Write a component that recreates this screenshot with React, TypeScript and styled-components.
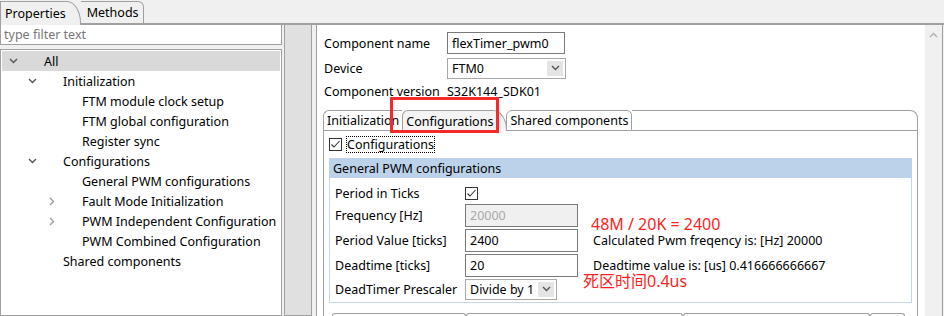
import styled, { createGlobalStyle } from "styled-components";

const GlobalStyle = createGlobalStyle`
	html, body {
		margin: 0;
		padding: 0;
		background: #f0f0f0;
	}
	body {
		font-family: "Noto Sans", "Noto Sans CJK SC", sans-serif;
		font-size: 12.5px;
		color: #000;
	}
`;

type TreeItem = { label: string; level: number; toggle?: "open" | "closed"; selected?: boolean };

const treeItems: TreeItem[] = [
	{ label: "All", level: 0, toggle: "open", selected: true },
	{ label: "Initialization", level: 1, toggle: "open" },
	{ label: "FTM module clock setup", level: 2 },
	{ label: "FTM global configuration", level: 2 },
	{ label: "Register sync", level: 2 },
	{ label: "Configurations", level: 1, toggle: "open" },
	{ label: "General PWM configurations", level: 2 },
	{ label: "Fault Mode Initialization", level: 2, toggle: "closed" },
	{ label: "PWM Independent Configuration", level: 2, toggle: "closed" },
	{ label: "PWM Combined Configuration", level: 2 },
	{ label: "Shared components", level: 1 },
];

function Chevron({ dir, color }: { dir: "down" | "right" | "up"; color: string }) {
	const pts = dir === "down" ? "1,2 4.5,5.5 8,2" : dir === "up" ? "1,6 4.5,2.5 8,6" : "3,1 6.5,4.5 3,8";
	return (
		<svg width="9" height="9" viewBox="0 0 9 9">
			<polyline points={pts} fill="none" stroke={color} strokeWidth="1.4" />
		</svg>
	);
}

function CheckBox() {
	return (
		<CheckSquare>
			<svg width="11" height="11" viewBox="0 0 11 11">
				<polyline points="1.5,5.5 4,8 9.5,2" fill="none" stroke="#333" strokeWidth="1.1" />
			</svg>
		</CheckSquare>
	);
}

export default function App() {
	return (
		<>
			<GlobalStyle />
			<Page>
				<ViewTabs>
					<ViewTab $active>Properties</ViewTab>
					<ViewTab>Methods</ViewTab>
					<ViewTabFill />
				</ViewTabs>
				<Body>
					<LeftPanel>
						<FilterInput placeholder="type filter text" />
						<TreeBox>
							{treeItems.map((item) => (
								<TreeRow key={item.label} $selected={item.selected}>
									<Toggle $level={item.level}>
										{item.toggle === "open" && <Chevron dir="down" color="#555" />}
										{item.toggle === "closed" && <Chevron dir="right" color="#9a9a9a" />}
									</Toggle>
									<TreeLabel>{item.label}</TreeLabel>
								</TreeRow>
							))}
						</TreeBox>
					</LeftPanel>
					<Sash>
						<SashBar />
					</Sash>
					<RightPanel>
						<Content>
							<FormRow $h={22}>
								<FormLabel>Component name</FormLabel>
								<TextBox $w={118}>flexTimer_pwm0</TextBox>
							</FormRow>
							<FormRow $h={21} $top={4}>
								<FormLabel>Device</FormLabel>
								<Select $w={119}>
									<span>FTM0</span>
									<DropButton>
										<Chevron dir="down" color="#555" />
									</DropButton>
								</Select>
							</FormRow>
							<FormRow $h={20} $top={2}>
								<FormLabel>Component version</FormLabel>
								<span>S32K144_SDK01</span>
							</FormRow>

							<Folder>
								<FolderTabs>
									<FolderTab>Initialization</FolderTab>
									<FolderTab $active>Configurations</FolderTab>
									<FolderTab>Shared components</FolderTab>
									<FolderTabFill />
								</FolderTabs>
								<FolderBody>
									<CheckRow>
										<CheckBox />
										<FocusText>Configurations</FocusText>
									</CheckRow>
									<Group>
										<GroupHeader>General PWM configurations</GroupHeader>
										<GroupBody>
											<FieldRow $h={20}>
												<FieldLabel>Period in Ticks</FieldLabel>
												<FieldCell>
													<CheckBox />
												</FieldCell>
											</FieldRow>
											<FieldRow $h={23} $top={1}>
												<FieldLabel>Frequency [Hz]</FieldLabel>
												<FieldInput $disabled>20000</FieldInput>
											</FieldRow>
											<FieldRow $h={23} $top={2}>
												<FieldLabel>Period Value [ticks]</FieldLabel>
												<FieldInput>2400</FieldInput>
												<Info>Calculated Pwm freqency is: [Hz] 20000</Info>
											</FieldRow>
											<FieldRow $h={23} $top={2}>
												<FieldLabel>Deadtime [ticks]</FieldLabel>
												<FieldInput>20</FieldInput>
												<Info>Deadtime value is: [us] 0.416666666667</Info>
											</FieldRow>
											<FieldRow $h={21} $top={2}>
												<FieldLabel>DeadTimer Prescaler</FieldLabel>
												<Select $w={92}>
													<span>Divide by 1</span>
													<DropButton>
														<Chevron dir="down" color="#555" />
													</DropButton>
												</Select>
											</FieldRow>
											<Note $x={261} $y={38}>48M / 20K = 2400</Note>
											<Note $x={253} $y={95}>死区时间0.4us</Note>
										</GroupBody>
									</Group>
									<NextHeaders>
										<HeaderCell $w={134} />
										<HeaderCell $w={217} />
										<HeaderCell $w={187} />
										<HeaderCell $w={35} />
									</NextHeaders>
								</FolderBody>
								<RedMark />
							</Folder>
						</Content>
						<ScrollBar>
							<Chevron dir="up" color="#b0b0b0" />
						</ScrollBar>
					</RightPanel>
				</Body>
			</Page>
		</>
	);
}

const Page = styled.div`
	width: 944px;
	height: 316px;
	overflow: hidden;
	display: flex;
	flex-direction: column;
	background: #f0f0f0;
`;

const ViewTabs = styled.div`
	height: 25px;
	display: flex;
	align-items: flex-end;
	flex-shrink: 0;
`;

const ViewTab = styled.div<{ $active?: boolean }>`
	height: 24px;
	box-sizing: border-box;
	padding: 0 ${(p) => (p.$active ? "14px" : "4px")} 1px ${(p) => (p.$active ? "4px" : "6px")};
	display: flex;
	align-items: center;
	border-top: 1px solid #a0a0a0;
	border-right: 1px solid #a0a0a0;
	border-left: ${(p) => (p.$active ? "1px solid #a0a0a0" : "none")};
	border-bottom: ${(p) => (p.$active ? "none" : "2px solid #a0a0a0")};
	border-top-right-radius: ${(p) => (p.$active ? "14px 22px" : "6px")};
	background: #f0f0f0;
`;

const ViewTabFill = styled.div`
	flex: 1;
	border-bottom: 2px solid #a0a0a0;
`;

const Body = styled.div`
	flex: 1;
	display: flex;
	min-height: 0;
`;

const LeftPanel = styled.div`
	width: 282px;
	display: flex;
	flex-direction: column;
	gap: 4px;
	flex-shrink: 0;
`;

const FilterInput = styled.input`
	height: 20px;
	flex-shrink: 0;
	box-sizing: border-box;
	margin: 0;
	border: 1px solid #a0a0a0;
	border-top: none;
	padding: 0 3px;
	font-family: inherit;
	font-size: 12.5px;
	outline: none;
	background: #fff;
	&::placeholder {
		color: #777;
	}
`;

const TreeBox = styled.div`
	flex: 1;
	background: #fff;
	border: 1px solid #a0a0a0;
	padding: 1px 1px 0 1px;
`;

const TreeRow = styled.div<{ $selected?: boolean }>`
	height: 20px;
	display: flex;
	align-items: center;
	background: ${(p) => (p.$selected ? "#d9d9d9" : "transparent")};
	white-space: nowrap;
`;

const Toggle = styled.span<{ $level: number }>`
	width: 9px;
	height: 9px;
	display: flex;
	margin-left: ${(p) => 7 + p.$level * 19}px;
`;

const TreeLabel = styled.span`
	margin-left: 26px;
`;

const Sash = styled.div`
	width: 34px;
	padding: 0 4px 0 2px;
	box-sizing: border-box;
	display: flex;
	flex-shrink: 0;
`;

const SashBar = styled.div`
	flex: 1;
	background: #e0e0e0;
	border: 1px solid #a0a0a0;
	border-top: none;
`;

const RightPanel = styled.div`
	flex: 1;
	display: flex;
	background: #fff;
	border-left: 1px solid #a0a0a0;
	border-right: 1px solid #a0a0a0;
	margin-right: 1px;
	overflow: hidden;
`;

const Content = styled.div`
	flex: 1;
	padding: 7px 7px 0 6px;
	display: flex;
	flex-direction: column;
`;

const FormRow = styled.div<{ $h: number; $top?: number }>`
	height: ${(p) => p.$h}px;
	margin-top: ${(p) => p.$top ?? 0}px;
	flex-shrink: 0;
	display: flex;
	align-items: center;
	padding-left: 1px;
`;

const FormLabel = styled.span`
	width: 123px;
	flex-shrink: 0;
`;

const TextBox = styled.div<{ $w: number }>`
	width: ${(p) => p.$w}px;
	height: 100%;
	box-sizing: border-box;
	border: 1px solid #7a7a7a;
	padding: 0 4px;
	display: flex;
	align-items: center;
`;

const Select = styled.div<{ $w: number }>`
	width: ${(p) => p.$w}px;
	height: 100%;
	box-sizing: border-box;
	border: 1px solid #a8a8a8;
	padding: 0 2px 0 4px;
	display: flex;
	align-items: center;
	justify-content: space-between;
	background: #fff;
	white-space: nowrap;
`;

const DropButton = styled.span`
	width: 16px;
	height: 15px;
	flex-shrink: 0;
	background: #e5e5e5;
	display: flex;
	align-items: center;
	justify-content: center;
`;

const Folder = styled.div`
	margin-top: 9px;
	flex: 1 0 auto;
	display: flex;
	flex-direction: column;
	position: relative;
`;

const FolderTabs = styled.div`
	height: 21px;
	display: flex;
	align-items: flex-end;
	flex-shrink: 0;
`;

const FolderTab = styled.div<{ $active?: boolean }>`
	height: 21px;
	box-sizing: border-box;
	display: flex;
	align-items: center;
	padding: 0 ${(p) => (p.$active ? "13px" : "3px")} 0 3px;
	border-top: 1px solid #a0a0a0;
	border-left: 1px solid #a0a0a0;
	border-right: ${(p) => (p.$active ? "1px solid #a0a0a0" : "none")};
	border-bottom: ${(p) => (p.$active ? "none" : "1px solid #a0a0a0")};
	border-top-left-radius: 6px;
	border-top-right-radius: ${(p) => (p.$active ? "14px 20px" : "0")};
	background: ${(p) => (p.$active ? "#f4f4f4" : "#fff")};
	white-space: nowrap;
	&:nth-child(3) {
		border-right: 1px solid #a0a0a0;
		border-top-right-radius: 5px;
		margin-left: -1px;
	}
`;

const FolderTabFill = styled.div`
	flex: 1;
	height: 21px;
	box-sizing: border-box;
	border-top: 1px solid #a0a0a0;
	border-right: 1px solid #a0a0a0;
	border-bottom: 1px solid #a0a0a0;
	border-top-right-radius: 8px;
`;

const FolderBody = styled.div`
	flex: 1;
	border-left: 1px solid #a0a0a0;
	border-right: 1px solid #a0a0a0;
	padding: 4px 5px 0 5px;
	display: flex;
	flex-direction: column;
`;

const CheckRow = styled.div`
	height: 18px;
	flex-shrink: 0;
	display: flex;
	align-items: center;
	gap: 4px;
`;

const CheckSquare = styled.span`
	width: 13px;
	height: 13px;
	box-sizing: border-box;
	border: 1px solid #333;
	background: #fff;
	display: flex;
	align-items: center;
	justify-content: center;
`;

const FocusText = styled.span`
	border: 1px dotted #000;
	line-height: 15px;
`;

const Group = styled.div`
	margin-top: 5px;
	flex-shrink: 0;
	border: 1px solid #c4d6ec;
	border-top: none;
`;

const GroupHeader = styled.div`
	height: 20px;
	background: #bcd2ea;
	display: flex;
	align-items: center;
	padding-left: 4px;
	margin: 0 -1px;
`;

const GroupBody = styled.div`
	position: relative;
	padding: 5px 0 2px 5px;
`;

const FieldRow = styled.div<{ $h: number; $top?: number }>`
	height: ${(p) => p.$h}px;
	margin-top: ${(p) => p.$top ?? 0}px;
	display: flex;
	align-items: center;
`;

const FieldLabel = styled.span`
	width: 130px;
	flex-shrink: 0;
`;

const FieldCell = styled.span`
	display: flex;
`;

const FieldInput = styled.div<{ $disabled?: boolean }>`
	width: 113px;
	height: 100%;
	box-sizing: border-box;
	border: 1px solid #7a7a7a;
	padding: 0 4px;
	display: flex;
	align-items: center;
	background: ${(p) => (p.$disabled ? "#f0f0f0" : "#fff")};
	color: ${(p) => (p.$disabled ? "#a8a8a8" : "#000")};
`;

const Info = styled.span`
	margin-left: 15px;
	line-height: 14px;
	white-space: nowrap;
`;

const Note = styled.span<{ $x: number; $y: number }>`
	position: absolute;
	left: ${(p) => p.$x}px;
	top: ${(p) => p.$y}px;
	color: #ff2222;
	font-size: 16px;
	line-height: 16px;
	white-space: nowrap;
`;

const NextHeaders = styled.div`
	margin-top: 10px;
	flex-shrink: 0;
	display: flex;
	padding-left: 3px;
`;

const HeaderCell = styled.div<{ $w: number }>`
	width: ${(p) => p.$w}px;
	height: 10px;
	box-sizing: border-box;
	border: 1px solid #a0a0a0;
	border-bottom: none;
	border-top-left-radius: 3px;
	border-top-right-radius: 3px;
`;

const RedMark = styled.div`
	position: absolute;
	left: 67px;
	top: -13px;
	width: 109px;
	height: 36px;
	box-sizing: border-box;
	border: 3px solid #f52a2a;
`;

const ScrollBar = styled.div`
	width: 17px;
	flex-shrink: 0;
	background: #f0f0f0;
	display: flex;
	justify-content: center;
	padding-top: 6px;
	box-sizing: border-box;
`;
